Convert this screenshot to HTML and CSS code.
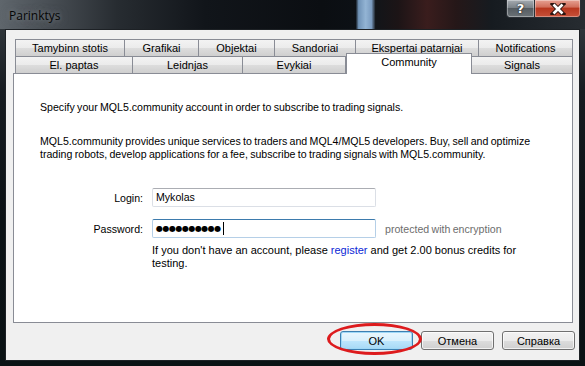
FILE: index.html
```html
<!DOCTYPE html>
<html lang="lt">
<head>
  <meta charset="UTF-8">
  <title>Parinktys</title>
  <link rel="stylesheet" href="styles.css">
</head>
<body>
  <div class="window">
    <div class="titlebar">
      <span class="title">Parinktys</span>
      <div class="caption-btns">
        <div class="cap help">?</div>
        <div class="cap close">
          <svg width="16" height="12" viewBox="0 0 16 12">
            <path d="M3 1 L13 11 M13 1 L3 11" stroke="#2b1410" stroke-width="4.5" stroke-linecap="square"/>
            <path d="M3.5 1.5 L12.5 10.5 M12.5 1.5 L3.5 10.5" stroke="#fff" stroke-width="2.6"/>
          </svg>
        </div>
      </div>
    </div>

    <div class="client">
      <div class="tabs">
        <div class="tab-row row-top">
          <div class="tab">Tamybinn stotis</div>
          <div class="tab">Grafikai</div>
          <div class="tab">Objektai</div>
          <div class="tab">Sandoriai</div>
          <div class="tab">Ekspertai patarnjai</div>
          <div class="tab">Notifications</div>
        </div>
        <div class="tab-row row-bottom">
          <div class="tab">El. paptas</div>
          <div class="tab">Leidnjas</div>
          <div class="tab">Evykiai</div>
          <div class="tab active">Community</div>
          <div class="tab">Signals</div>
        </div>
      </div>

      <div class="panel">
        <p class="intro">Specify your MQL5.community account in order to subscribe to trading signals.</p>
        <p class="about">MQL5.community provides unique services to traders and MQL4/MQL5 developers. Buy, sell and optimize<br>trading robots, develop applications for a fee, subscribe to trading signals with MQL5.community.</p>

        <div class="form">
          <label>Login:</label>
          <div class="field">Mykolas</div>
          <span></span>

          <label>Password:</label>
          <div class="field focus"><span class="dots">●●●●●●●●●●</span><span class="caret"></span></div>
          <span class="note">protected with encryption</span>

          <span></span>
          <p class="hint">If you don't have an account, please <a href="#">register</a> and get 2.00 bonus credits for<br>testing.</p>
        </div>
      </div>

      <div class="buttons">
        <div class="btn-wrap">
          <button class="btn default">OK</button>
          <span class="mark"></span>
        </div>
        <button class="btn">Отмена</button>
        <button class="btn">Справка</button>
      </div>
    </div>
  </div>
</body>
</html>
```

FILE: styles.css
```css
body {
  margin: 0;
  width: 585px;
  height: 366px;
  overflow: hidden;
  background: #0b1014;
  font-family: Tahoma, 'Liberation Sans', Arial, sans-serif;
  font-size: 11px;
  color: #000;
}
.window {
  height: 366px;
  background: linear-gradient(180deg, #3a4045 0%, #161b20 25%, #0b1115 60%, #0a1214 100%);
}

/* title bar */
.titlebar {
  height: 29px;
  display: flex;
  align-items: flex-start;
  background: linear-gradient(90deg, #5f666c 0%, #4a5056 8%, #272c31 20%, #11151a 35%, #0b0e12 55%, #0c1015 60.8%, #6f92b6 61.3%, #93b4d4 62.5%, #7b9cc0 63.5%, #121519 64.2%, #1c1416 68%, #3a1d1d 73%, #251718 78%, #161b20 84%, #272c31 100%);
}
.title {
  margin: 7px 0 0 7px;
  padding: 0 2px;
  font-family: 'Open Sans', 'Noto Sans', sans-serif;
  font-size: 12px;
  color: #050505;
  text-shadow: 0 0 4px rgba(120, 126, 132, 0.9), 0 0 9px rgba(120, 126, 132, 0.8);
}
.caption-btns {
  margin-left: auto;
  margin-right: 4px;
  display: flex;
}
.cap {
  height: 18px;
  box-sizing: border-box;
  border: 1px solid #2a2f35;
  border-top: none;
  display: flex;
  align-items: center;
  justify-content: center;
  box-shadow: inset 0 0 0 1px rgba(255, 255, 255, 0.35);
}
.help {
  width: 29px;
  border-radius: 0 0 0 4px;
  background: linear-gradient(180deg, #a5abb1 0%, #7b8288 45%, #555c62 50%, #6b7277 100%);
  color: #fff;
  font-family: 'DejaVu Sans', sans-serif;
  font-weight: bold;
  font-size: 13px;
  text-shadow: 0 0 2px #222, 0 0 1px #000;
}
.close {
  width: 46px;
  border-left: none;
  border-radius: 0 0 4px 0;
  background: linear-gradient(180deg, #e6a193 0%, #d2705d 40%, #b8371f 50%, #c7513a 100%);
}

/* dialog client area */
.client {
  margin-left: 5px;
  width: 573px;
  height: 330px;
  border: 1px solid #1d2125;
  background: #f0f0f0;
  display: flex;
  flex-direction: column;
}

/* tabs */
.tabs {
  margin: 9px 0 0 9px;
  width: 558px;
}
.tab-row {
  display: grid;
  grid-template-rows: 18px;
}
.row-top {
  grid-template-columns: 110px 74px 76px 81px 123px 94px;
}
.row-bottom {
  margin-top: -1px;
  grid-template-columns: 118px 110px 103px 126px 101px;
}
.tab {
  box-sizing: border-box;
  border: 1px solid #898c95;
  border-left: none;
  background: linear-gradient(180deg, #f3f3f3 0%, #ebebeb 50%, #dddddd 51%, #cfcfcf 100%);
  text-align: center;
  line-height: 16px;
  white-space: nowrap;
}
.tab:first-child {
  border-left: 1px solid #898c95;
}
.tab.active {
  position: relative;
  z-index: 1;
  align-self: start;
  height: 21px;
  margin-top: -3px;
  border-left: 1px solid #898c95;
  border-bottom: none;
  background: #fff;
  line-height: 17px;
}

/* page */
.panel {
  position: relative;
  margin: -1px 0 0 7px;
  width: 560px;
  height: 250px;
  box-sizing: border-box;
  border: 1px solid #898c95;
  background: #fff;
  padding: 27px 0 0 26px;
  font-size: 10.6px;
  word-spacing: -0.6px;
}
.panel p {
  margin: 0;
  line-height: 13px;
}
.about {
  margin-top: 21px !important;
}

.form {
  margin-top: 27px;
  display: grid;
  grid-template-columns: 103px 224px auto;
  column-gap: 9px;
  row-gap: 12px;
  align-items: center;
}
.form label {
  text-align: right;
}
.field {
  height: 19px;
  box-sizing: border-box;
  border: 1px solid #dbdfe6;
  border-top-color: #abadb3;
  border-radius: 2px;
  padding-left: 3px;
  line-height: 17px;
  display: flex;
  align-items: center;
}
.field.focus {
  border-color: #b5cfe7;
  border-top-color: #3d7bad;
}
.dots {
  font-family: 'DejaVu Sans', sans-serif;
  font-size: 8px;
  letter-spacing: -0.5px;
}
.caret {
  width: 1px;
  height: 13px;
  margin-left: 2px;
  background: #000;
}
.note {
  color: #6d6d6d;
}
.hint {
  grid-column: 2 / span 2;
  margin-top: -6px !important;
  line-height: 13px;
  font-size: 11px;
  word-spacing: 0;
}
.hint a {
  color: #0b1fd6;
  text-decoration: none;
}

/* buttons */
.buttons {
  margin: 8px 4px 0 0;
  display: flex;
  justify-content: flex-end;
  gap: 8px;
}
.btn-wrap {
  position: relative;
  display: flex;
}
.btn {
  width: 73px;
  height: 19px;
  margin: 0;
  padding: 0;
  border: 1px solid #707070;
  border-radius: 3px;
  background: linear-gradient(180deg, #f2f2f2 0%, #ebebeb 50%, #dddddd 51%, #cfcfcf 100%);
  box-shadow: inset 0 0 0 1px rgba(255, 255, 255, 0.7);
  font-family: Tahoma, 'Liberation Sans', Arial, sans-serif;
  font-size: 11px;
  color: #000;
}
.btn.default {
  border-color: #3c7fb1;
  background: linear-gradient(180deg, #eaf6fd 0%, #d9f0fc 50%, #bee6fd 51%, #a7d9f5 100%);
  box-shadow: inset 0 0 0 1px #9fd8f7;
}
.mark {
  position: absolute;
  left: -13px;
  top: -8px;
  width: 95px;
  height: 32px;
  box-sizing: border-box;
  border: 3px solid #dd1b1d;
  border-radius: 50%;
  pointer-events: none;
}
```
